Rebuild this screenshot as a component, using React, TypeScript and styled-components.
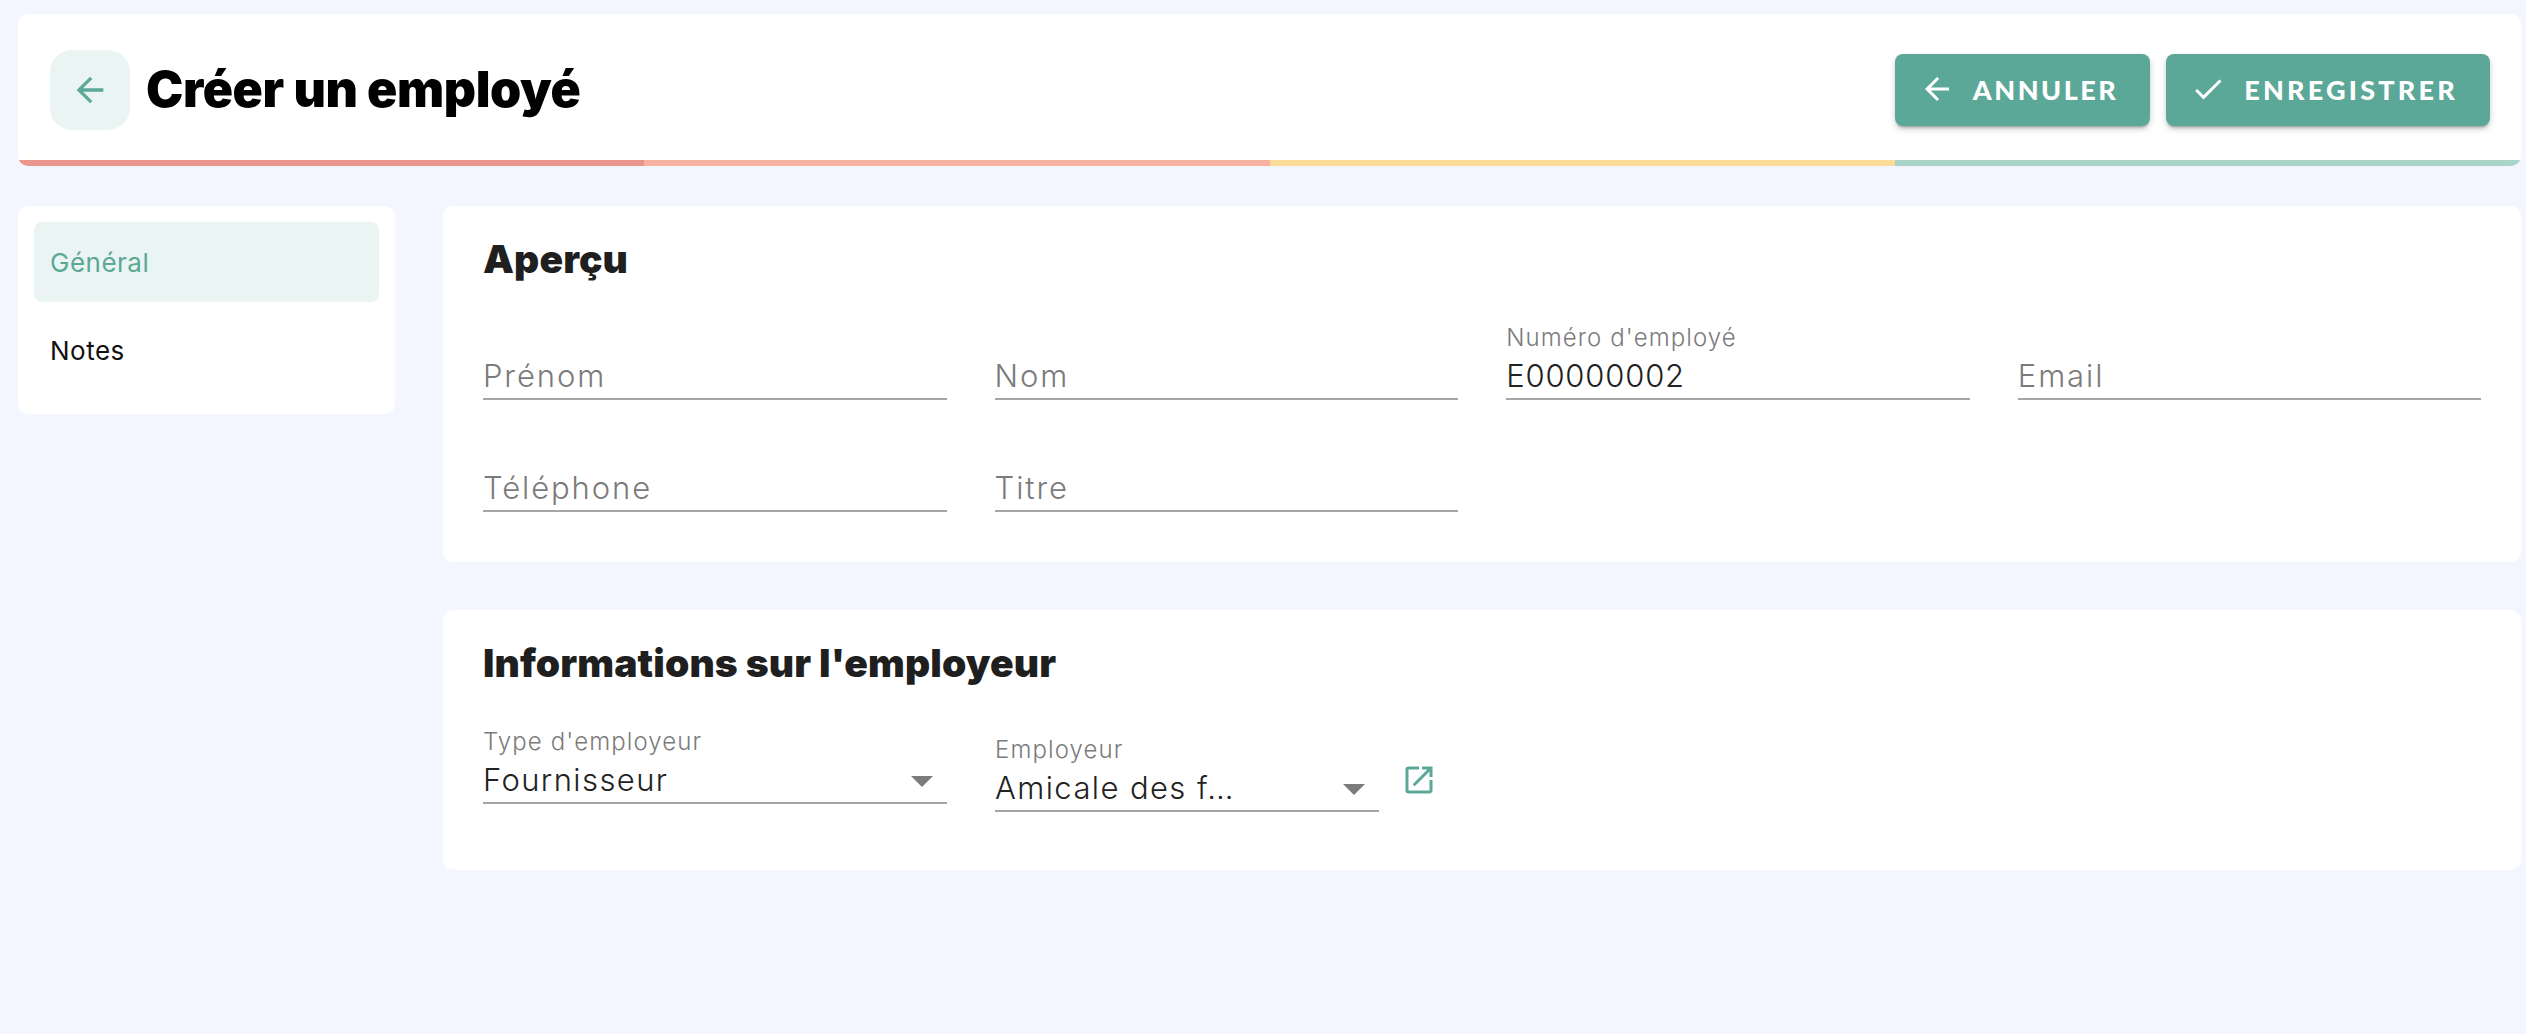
import React, {FunctionComponent} from 'react'
import styled, {createGlobalStyle} from 'styled-components'
import {MdArrowBack, MdCheck, MdOpenInNew} from 'react-icons/md'

const teal = '#5ca898'
const tint = '#eaf4f2'

const GlobalStyle = createGlobalStyle`
  html, body {
    margin: 0;
    background: #f3f6fe;
    font-family: "Inter", "Liberation Sans", sans-serif;
  }
  * { box-sizing: border-box; }
`

const Page = styled.div`
  height: 1034px;
  padding: 14px 5px 0 18px;
  overflow: hidden;
`

const TopCard = styled.header`
  height: 152px;
  background: #fff;
  border-radius: 10px;
  overflow: hidden;
  display: flex;
  flex-direction: column;
`

const TopRow = styled.div`
  flex: 1;
  display: flex;
  align-items: center;
  padding: 6px 31px 0 32px;
`

const BackButton = styled.button`
  width: 80px;
  height: 80px;
  border: 0;
  border-radius: 22px;
  background: ${tint};
  color: ${teal};
  display: flex;
  align-items: center;
  justify-content: center;
  font-size: 40px;
  padding: 0;
`

const Title = styled.h1`
  margin: 0 0 3px 16px;
  font-family: "Inter", sans-serif;
  font-weight: 900;
  font-size: 50px;
  letter-spacing: -0.4px;
  color: #000;
  flex: 1;
`

const ActionButton = styled.button<{$spacing: number}>`
  height: 72px;
  margin-left: 16px;
  padding: 0 32px 2px 24px;
  border: 0;
  border-radius: 8px;
  background: ${teal};
  color: #fff;
  display: flex;
  align-items: center;
  gap: 18px;
  font-family: "Lato", sans-serif;
  font-weight: 900;
  font-size: 27px;
  letter-spacing: ${p => p.$spacing}px;
  box-shadow: 0 3px 3px -2px rgba(0,0,0,.3), 0 3px 6px rgba(0,0,0,.2);
  svg { font-size: 36px; }
`

const ProgressBar = styled.div`
  display: flex;
  height: 6px;
`

const ProgressPart = styled.div<{$color: string}>`
  flex: 1;
  background: ${p => p.$color};
`

const Body = styled.div`
  display: flex;
  align-items: flex-start;
  gap: 48px;
  margin-top: 40px;
`

const Sidebar = styled.nav`
  width: 377px;
  flex: none;
  height: 208px;
  padding: 16px;
  background: #fff;
  border-radius: 10px;
`

const NavItem = styled.div<{$active?: boolean}>`
  height: 80px;
  margin-bottom: 8px;
  padding: 0 16px;
  display: flex;
  align-items: center;
  border-radius: 8px;
  font-size: 26px;
  letter-spacing: .5px;
  background: ${p => (p.$active ? tint : 'transparent')};
  color: ${p => (p.$active ? teal : '#111')};
`

const Main = styled.main`
  flex: 1;
  display: flex;
  flex-direction: column;
  gap: 48px;
`

const Section = styled.section`
  background: #fff;
  border-radius: 10px;
  padding: 25px 39px 50px 40px;
`

const SectionTitle = styled.h2`
  margin: 0 0 41px;
  height: 56px;
  line-height: 56px;
  font-family: "Inter", sans-serif;
  font-weight: 900;
  font-size: 39px;
  letter-spacing: 0.1px;
  color: #1f1f1f;
`

const FieldGrid = styled.div`
  display: grid;
  grid-template-columns: repeat(4, 463.6px);
  column-gap: 48px;
  row-gap: 40px;
`

const Field = styled.div<{$width?: number}>`
  height: 72px;
  padding-bottom: 3px;
  display: flex;
  flex-direction: column;
  justify-content: flex-end;
  border-bottom: 2px solid #a5a5a5;
  position: relative;
  ${p => p.$width && `width: ${p.$width}px;`}
`

const FieldLabel = styled.label`
  font-size: 24px;
  line-height: 30px;
  margin-bottom: 4px;
  font-weight: 300;
  letter-spacing: 1.1px;
  color: #7b7b7b;
`

const FieldValue = styled.div<{$placeholder?: boolean; $digits?: boolean}>`
  font-size: 31px;
  line-height: 38px;
  font-weight: 300;
  letter-spacing: ${p => (p.$digits ? 0.8 : p.$placeholder ? 1.9 : 1.4)}px;
  color: ${p => (p.$placeholder ? '#7b7b7b' : '#222')};
`

const Caret = styled.span`
  position: absolute;
  right: 14px;
  bottom: 15px;
  width: 0;
  height: 0;
  border-left: 11px solid transparent;
  border-right: 11px solid transparent;
  border-top: 11px solid #7b7b7b;
`

const EmployerRow = styled.div`
  display: flex;
  align-items: flex-start;
  gap: 48px;
  margin-bottom: 8px;
`

const EmployerGroup = styled.div`
  display: flex;
  margin-top: 8px;
`

const ExternalLink = styled.a`
  color: ${teal};
  font-size: 36px;
  line-height: 0;
  margin: 22px 0 0 22px;
`

const TextField: FunctionComponent<{label: string; value?: string}> = ({label, value}) => (
  <Field>
    {value && <FieldLabel>{label}</FieldLabel>}
    <FieldValue $placeholder={!value} $digits={!!value}>{value || label}</FieldValue>
  </Field>
)

const SelectField: FunctionComponent<{label: string; value: string; width: number}> = ({label, value, width}) => (
  <Field $width={width}>
    <FieldLabel>{label}</FieldLabel>
    <FieldValue>{value}</FieldValue>
    <Caret/>
  </Field>
)

const App: FunctionComponent = () => (
  <Page>
    <GlobalStyle/>
    <TopCard>
      <TopRow>
        <BackButton><MdArrowBack/></BackButton>
        <Title>Créer un employé</Title>
        <ActionButton $spacing={2.5}><MdArrowBack/>ANNULER</ActionButton>
        <ActionButton $spacing={3.2}><MdCheck/>ENREGISTRER</ActionButton>
      </TopRow>
      <ProgressBar>
        <ProgressPart $color="#e8968e"/>
        <ProgressPart $color="#f6b29e"/>
        <ProgressPart $color="#fadb98"/>
        <ProgressPart $color="#a9d5c8"/>
      </ProgressBar>
    </TopCard>
    <Body>
      <Sidebar>
        <NavItem $active>Général</NavItem>
        <NavItem>Notes</NavItem>
      </Sidebar>
      <Main>
        <Section>
          <SectionTitle>Aperçu</SectionTitle>
          <FieldGrid>
            <TextField label="Prénom"/>
            <TextField label="Nom"/>
            <TextField label="Numéro d'employé" value="E00000002"/>
            <TextField label="Email"/>
            <TextField label="Téléphone"/>
            <TextField label="Titre"/>
          </FieldGrid>
        </Section>
        <Section>
          <SectionTitle>Informations sur l'employeur</SectionTitle>
          <EmployerRow>
            <SelectField label="Type d'employeur" value="Fournisseur" width={464}/>
            <EmployerGroup>
              <SelectField label="Employeur" value="Amicale des f…" width={384}/>
              <ExternalLink><MdOpenInNew/></ExternalLink>
            </EmployerGroup>
          </EmployerRow>
        </Section>
      </Main>
    </Body>
  </Page>
)

export default App
